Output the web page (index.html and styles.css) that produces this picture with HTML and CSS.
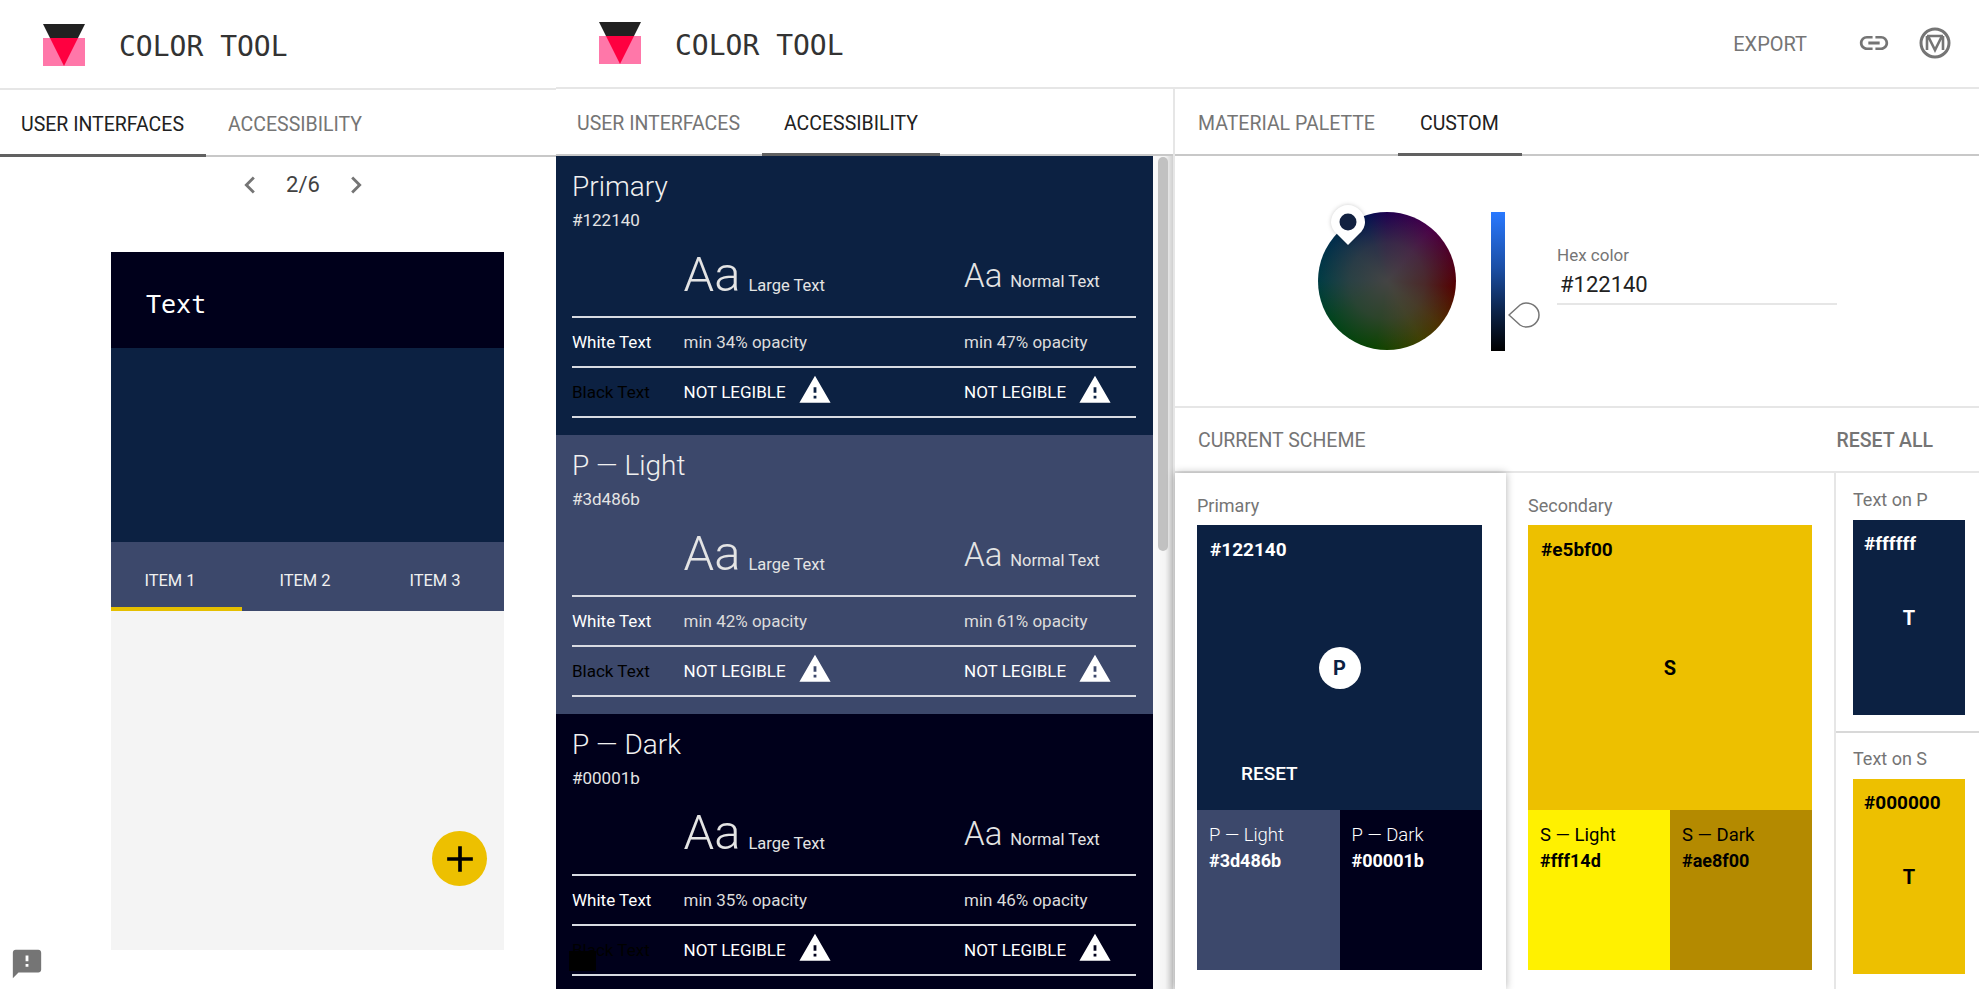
FILE: index.html
```html
<!DOCTYPE html>
<html>
<head>
<title>Color Tool</title>
<meta charset="UTF-8">
<link rel="stylesheet" href="styles.css">
</head>
<body>
<div class="app">

  <div class="preview">
    <div class="topbar preview-top">
      <svg class="logo" viewBox="0 0 42 42"><rect y="14" width="42" height="28" fill="#ff77a9"/><polygon points="0,0 42,0 35,14 7,14" fill="#212121"/><polygon points="7,14 35,14 21,42" fill="#ff0040"/></svg>
      <span class="brand">COLOR TOOL</span>
    </div>
    <div class="tabs preview-tabs">
      <div class="tab active first">USER INTERFACES</div>
      <div class="tab">ACCESSIBILITY</div>
    </div>
    <div class="pager">
      <svg class="chev" viewBox="0 0 24 24"><path d="M15.41 7.41L14 6l-6 6 6 6 1.41-1.41L10.83 12z"/></svg>
      <span>2/6</span>
      <svg class="chev" viewBox="0 0 24 24"><path d="M8.59 16.59L10 18l6-6-6-6-1.41 1.41L13.17 12z"/></svg>
    </div>
    <div class="phone">
      <div class="phone-bar">Text</div>
      <div class="phone-hero"></div>
      <div class="phone-tabs">
        <div class="phone-tab on">ITEM 1</div>
        <div class="phone-tab">ITEM 2</div>
        <div class="phone-tab">ITEM 3</div>
      </div>
      <div class="phone-body">
        <div class="fab"><svg viewBox="0 0 24 24"><path d="M19 13h-6v6h-2v-6H5v-2h6V5h2v6h6v2z"/></svg></div>
      </div>
    </div>
    <svg class="feedback" viewBox="0 0 24 24"><path d="M20 2H4c-1.1 0-1.99.9-1.99 2L2 22l4-4h14c1.1 0 2-.9 2-2V4c0-1.1-.9-2-2-2zm-7 12h-2v-2h2v2zm0-4h-2V6h2v4z"/></svg>
  </div>

  <div class="tool">
    <div class="topbar tool-top">
      <svg class="logo" viewBox="0 0 42 42"><rect y="14" width="42" height="28" fill="#ff77a9"/><polygon points="0,0 42,0 35,14 7,14" fill="#212121"/><polygon points="7,14 35,14 21,42" fill="#ff0040"/></svg>
      <span class="brand">COLOR TOOL</span>
      <span class="export">EXPORT</span>
      <svg class="link-icon" viewBox="0 0 24 24"><path d="M3.9 12c0-1.71 1.39-3.1 3.1-3.1h4V7H7c-2.76 0-5 2.24-5 5s2.24 5 5 5h4v-1.9H7c-1.71 0-3.1-1.39-3.1-3.1zM8 13h8v-2H8v2zm9-6h-4v1.9h4c1.71 0 3.1 1.39 3.1 3.1s-1.39 3.1-3.1 3.1h-4V17h4c2.76 0 5-2.24 5-5s-2.24-5-5-5z"/></svg>
      <svg class="m-icon" viewBox="0 0 32 32"><circle cx="16" cy="16" r="14" fill="none" stroke="#757575" stroke-width="3"/><path d="M8 9v14M24 9v14M8 9h16M9 9l7 14 7-14" fill="none" stroke="#757575" stroke-width="2.6"/></svg>
    </div>

    <div class="columns">
      <div class="access">
        <div class="tabs access-tabs">
          <div class="tab">USER INTERFACES</div>
          <div class="tab active">ACCESSIBILITY</div>
        </div>
        <div class="access-scroll">
          <div class="panels">

            <div class="panel primary">
              <h2>Primary</h2>
              <div class="panel-hex">#122140</div>
              <div class="row row-head">
                <div></div>
                <div class="large"><span class="aa-l">Aa</span> <span class="aa-note">Large Text</span></div>
                <div class="normal"><span class="aa-n">Aa</span> <span class="aa-note">Normal Text</span></div>
              </div>
              <div class="row"><div class="white">White Text</div><div class="dim">min 34% opacity</div><div class="dim">min 47% opacity</div></div>
              <div class="row">
                <div class="black">Black Text</div>
                <div class="bad">NOT LEGIBLE <svg class="warn" viewBox="0 0 24 24"><path d="M1 21h22L12 2 1 21zm12-3h-2v-2h2v2zm0-4h-2v-4h2v4z"/></svg></div>
                <div class="bad">NOT LEGIBLE <svg class="warn" viewBox="0 0 24 24"><path d="M1 21h22L12 2 1 21zm12-3h-2v-2h2v2zm0-4h-2v-4h2v4z"/></svg></div>
              </div>
            </div>

            <div class="panel light">
              <h2>P — Light</h2>
              <div class="panel-hex">#3d486b</div>
              <div class="row row-head">
                <div></div>
                <div class="large"><span class="aa-l">Aa</span> <span class="aa-note">Large Text</span></div>
                <div class="normal"><span class="aa-n">Aa</span> <span class="aa-note">Normal Text</span></div>
              </div>
              <div class="row"><div class="white">White Text</div><div class="dim">min 42% opacity</div><div class="dim">min 61% opacity</div></div>
              <div class="row">
                <div class="black">Black Text</div>
                <div class="bad">NOT LEGIBLE <svg class="warn" viewBox="0 0 24 24"><path d="M1 21h22L12 2 1 21zm12-3h-2v-2h2v2zm0-4h-2v-4h2v4z"/></svg></div>
                <div class="bad">NOT LEGIBLE <svg class="warn" viewBox="0 0 24 24"><path d="M1 21h22L12 2 1 21zm12-3h-2v-2h2v2zm0-4h-2v-4h2v4z"/></svg></div>
              </div>
            </div>

            <div class="panel dark">
              <h2>P — Dark</h2>
              <div class="panel-hex">#00001b</div>
              <div class="row row-head">
                <div></div>
                <div class="large"><span class="aa-l">Aa</span> <span class="aa-note">Large Text</span></div>
                <div class="normal"><span class="aa-n">Aa</span> <span class="aa-note">Normal Text</span></div>
              </div>
              <div class="row"><div class="white">White Text</div><div class="dim">min 35% opacity</div><div class="dim">min 46% opacity</div></div>
              <div class="row">
                <div class="black">Black Text<span class="ghost"></span></div>
                <div class="bad">NOT LEGIBLE <svg class="warn" viewBox="0 0 24 24"><path d="M1 21h22L12 2 1 21zm12-3h-2v-2h2v2zm0-4h-2v-4h2v4z"/></svg></div>
                <div class="bad">NOT LEGIBLE <svg class="warn" viewBox="0 0 24 24"><path d="M1 21h22L12 2 1 21zm12-3h-2v-2h2v2zm0-4h-2v-4h2v4z"/></svg></div>
              </div>
            </div>

          </div>
          <div class="scrollbar"><div class="thumb"></div></div>
        </div>
      </div>

      <div class="custom">
        <div class="tabs custom-tabs">
          <div class="tab">MATERIAL PALETTE</div>
          <div class="tab active">CUSTOM</div>
        </div>

        <div class="picker">
          <div class="wheel">
            <svg class="pin" viewBox="0 0 34 40"><path d="M17 0C8 0 0 8 0 17c0 5 3 9 5 11l12 12 12-12c2-2 5-6 5-11 0-9-8-17-17-17z" fill="#fff"/><circle cx="17" cy="17" r="8.5" fill="#122140"/></svg>
          </div>
          <div class="hue">
            <svg class="drop" viewBox="0 0 32 26"><path d="M1 13L12 3c2-1.500 4-2 6-2 7 0 13 5 13 12s-6 12-13 12c-2 0-4-.5-6-2z" fill="#fff" stroke="#757575" stroke-width="1.500"/></svg>
          </div>
          <div class="hex-field">
            <div class="hex-label">Hex color</div>
            <div class="hex-value">#122140</div>
          </div>
        </div>

        <div class="scheme-head">
          <span>CURRENT SCHEME</span>
          <span class="reset-all">RESET ALL</span>
        </div>

        <div class="scheme">
          <div class="card card-main raised">
            <div class="card-label">Primary</div>
            <div class="swatch-big s-primary">
              <div class="big-hex">#122140</div>
              <div class="badge badge-on">P</div>
              <div class="reset">RESET</div>
            </div>
            <div class="swatch-pair">
              <div class="swatch-small s-light"><div>P — Light</div><b>#3d486b</b></div>
              <div class="swatch-small s-dark"><div>P — Dark</div><b>#00001b</b></div>
            </div>
          </div>

          <div class="card card-main second">
            <div class="card-label">Secondary</div>
            <div class="swatch-big s-second">
              <div class="big-hex">#e5bf00</div>
              <div class="badge">S</div>
            </div>
            <div class="swatch-pair">
              <div class="swatch-small s-slight"><div>S — Light</div><b>#fff14d</b></div>
              <div class="swatch-small s-sdark"><div>S — Dark</div><b>#ae8f00</b></div>
            </div>
          </div>

          <div class="text-cards">
            <div class="text-card">
              <div class="card-label">Text on P</div>
              <div class="swatch-text s-primary"><div class="big-hex">#ffffff</div><div class="badge">T</div></div>
            </div>
            <div class="text-card">
              <div class="card-label">Text on S</div>
              <div class="swatch-text s-second"><div class="big-hex">#000000</div><div class="badge">T</div></div>
            </div>
          </div>
        </div>
      </div>
    </div>
  </div>

</div>
</body>
</html>
```

FILE: styles.css
```css
* { box-sizing: border-box; }
html, body {
  margin: 0;
  height: 100%;
  overflow: hidden;
  background: #fff;
}
body {
  font-family: Roboto, "Liberation Sans", sans-serif;
  color: #212121;
}
svg { display: block; }

.app {
  display: flex;
  height: 989px;
  position: relative;
}

/* header */
.topbar {
  display: flex;
  align-items: center;
  border-bottom: 2px solid #e6e6e6;
}
.preview-top {
  height: 90px;
  padding: 2px 0 0 43px;
}
.tool-top {
  height: 89px;
  padding: 0 28px 2px 43px;
}
.logo {
  width: 42px;
  height: 42px;
  flex: none;
}
.brand {
  font-family: "DejaVu Sans Mono", monospace;
  font-size: 28px;
  margin: 2px 0 0 34px;
  white-space: pre;
  color: #333;
}
.tool-top .brand { margin-top: 5px; }
.export {
  margin: 2px 50px 0 auto;
  font-size: 20px;
  color: #757575;
}
.link-icon {
  width: 34px;
  height: 34px;
  fill: #757575;
  margin-right: 28px;
}
.m-icon {
  width: 32px;
  height: 32px;
}

/* tabs */
.tabs {
  display: flex;
  height: 67px;
  border-bottom: 2px solid #c8c8c8;
  flex: none;
}
.tab {
  padding: 0 22px;
  font-size: 19.5px;
  line-height: 69px;
  color: #757575;
  white-space: nowrap;
  margin-bottom: -2px;
}
.tab.active {
  color: #212121;
  border-bottom: 3px solid #616161;
}
.preview-tabs .tab.first { padding: 0 22px 0 21px; }

/* left column */
.preview {
  width: 556px;
  flex: none;
}
.pager {
  height: 95px;
  display: flex;
  justify-content: center;
  align-items: flex-start;
  padding: 11px 0 0 50px;
  gap: 19px;
  font-size: 22px;
  line-height: 34px;
  color: #424242;
}
.chev {
  width: 34px;
  height: 34px;
  fill: #757575;
}
.phone {
  width: 393px;
  height: 698px;
  margin-left: 111px;
  display: flex;
  flex-direction: column;
}
.phone-bar {
  height: 96px;
  background: #00001b;
  color: #fff;
  font-family: "DejaVu Sans Mono", monospace;
  font-size: 25px;
  padding: 38px 0 0 35px;
}
.phone-hero {
  height: 194px;
  background: #0c2142;
}
.phone-tabs {
  height: 69px;
  background: #3c486b;
  display: flex;
}
.phone-tab {
  width: 131px;
  text-align: center;
  color: #f0f0f0;
  font-size: 16.5px;
  line-height: 78px;
  padding-right: 5px;
}
.phone-tab.on {
  border-bottom: 4px solid #e5bf00;
  padding-right: 13px;
}
.phone-tab:last-child { padding-right: 7px; }
.phone-body {
  flex: 1;
  background: #f4f4f4;
  position: relative;
}
.fab {
  position: absolute;
  right: 17px;
  bottom: 64px;
  width: 55px;
  height: 55px;
  border-radius: 50%;
  background: #edc000;
  display: flex;
  align-items: center;
  justify-content: center;
}
.fab svg { width: 44px; height: 44px; fill: #000; flex: none; }
.feedback {
  position: absolute;
  left: 10px;
  top: 947px;
  width: 34px;
  height: 34px;
  fill: #757575;
}

/* right of the preview */
.tool {
  flex: 1;
  display: flex;
  flex-direction: column;
  min-width: 0;
}
.columns {
  display: flex;
  flex: 1;
  min-height: 0;
}

/* accessibility */
.access {
  width: 619px;
  flex: none;
  border-right: 2px solid #e6e6e6;
  display: flex;
  flex-direction: column;
  min-height: 0;
}
.access-tabs .tab:first-child { padding-left: 21px; }
.access-scroll {
  flex: 1;
  display: flex;
  overflow: hidden;
}
.panels { width: 597px; flex: none; }
.scrollbar {
  flex: 1;
  background: linear-gradient(to right, #fafafa, #f4f4f4 60%, #d0d0d0);
  padding: 1px 5px 0 5px;
}
.thumb {
  height: 394px;
  background: #c1c1c1;
  border-radius: 6px;
}
.panel {
  height: 279px;
  padding: 12px 16px 0 16px;
  color: #fff;
}
.panel.primary { background: #0c2142; }
.panel.light { background: #3c486b; }
.panel.dark { background: #00001b; }
.panel h2 {
  margin: 0;
  font-size: 28px;
  font-weight: 300;
  line-height: 38px;
  color: #f0f0f0;
}
.panel-hex {
  font-size: 17px;
  line-height: 24px;
  margin-top: 2px;
  color: #e4e4e4;
  height: 35px;
}
.row {
  display: grid;
  grid-template-columns: 111.5px 280.500px 1fr;
  height: 50px;
  align-items: center;
  border-bottom: 2px solid #d8dbe2;
  font-size: 17px;
  width: 564px;
}
.row-head {
  height: 75px;
  padding-bottom: 21px;
  align-items: end;
}
.large, .normal {
  display: flex;
  align-items: baseline;
  gap: 8px;
  color: #e4e4e4;
  font-weight: 300;
}
.normal { margin-bottom: 4px; }
.aa-l { font-size: 49px; line-height: 40px; }
.aa-n { font-size: 33px; line-height: 30px; }
.aa-note { font-size: 16.5px; font-weight: 400; }
.white { color: #fff; }
.black { color: #000; position: relative; }
.dim { color: #dcdcdc; }
.bad {
  display: flex;
  align-items: center;
  gap: 12px;
  color: #fff;
}
.warn {
  width: 34px;
  height: 34px;
  fill: #fff;
  margin-top: -4px;
}
.ghost {
  position: absolute;
  left: -3px;
  top: 11px;
  width: 27px;
  height: 20px;
  background: #000;
}

/* custom */
.custom {
  flex: 1;
  display: flex;
  flex-direction: column;
  min-width: 0;
}
.custom-tabs .tab { padding: 0 23px 0 22px; }
.custom-tabs .tab:first-child { padding-left: 23px; }
.picker {
  height: 252px;
  border-bottom: 2px solid #e6e6e6;
  display: flex;
  align-items: flex-start;
  padding: 56px 0 0 143px;
  flex: none;
}
.wheel {
  width: 138px;
  height: 138px;
  border-radius: 50%;
  position: relative;
  background:
    radial-gradient(circle closest-side, #444 0, rgba(68,68,68,0.6) 55%, rgba(68,68,68,0) 100%),
    conic-gradient(#1e0050 0deg, #4a0048 40deg, #4f0020 70deg, #540000 95deg, #4d3000 130deg, #404000 150deg, #0a4400 190deg, #00441c 235deg, #003c44 270deg, #002c4c 310deg, #001450 340deg, #1e0050 360deg);
}
.pin {
  position: absolute;
  left: 13px;
  top: -7px;
  width: 34px;
  height: 40px;
  filter: drop-shadow(0 0 2px rgba(0,0,0,0.2));
}
.hue {
  width: 14px;
  height: 139px;
  margin-left: 35px;
  background: linear-gradient(#2979ff, #1b4fa6 40%, #0c2348 72%, #000);
  position: relative;
  flex: none;
}
.drop {
  position: absolute;
  left: 17px;
  top: 90px;
  width: 32px;
  height: 26px;
}
.hex-field {
  width: 280px;
  margin-left: 52px;
  margin-top: 33px;
  border-bottom: 2px solid #e6e6e6;
  height: 60px;
}
.hex-label {
  font-size: 17px;
  line-height: 20px;
  color: #757575;
}
.hex-value {
  font-size: 22px;
  line-height: 30px;
  margin: 5px 0 0 3px;
  color: #212121;
}
.scheme-head {
  height: 65px;
  flex: none;
  border-bottom: 2px solid #e6e6e6;
  display: flex;
  justify-content: space-between;
  align-items: center;
  padding: 2px 46px 0 23px;
  font-size: 19.5px;
  color: #757575;
}
.reset-all { font-weight: 500; }
.scheme {
  display: flex;
  flex: 1;
  min-height: 0;
}
.card-label {
  font-size: 18px;
  line-height: 20px;
  color: #757575;
}
.card-main {
  width: 331px;
  flex: none;
  padding: 23px 24px 0 22px;
  border-right: 2px solid #e6e6e6;
}
.card-main.second {
  width: 330px;
  padding-left: 22px;
  padding-right: 22px;
}
.card-main .card-label { height: 29px; }
.raised {
  box-shadow: 0 0 8px rgba(0,0,0,0.3);
  border-right: 0;
  position: relative;
}
.swatch-big {
  height: 285px;
  position: relative;
  padding: 13px;
}
.s-primary { background: #0c2142; color: #fff; }
.s-second { background: #edc000; color: #000; }
.big-hex {
  font-size: 19px;
  font-weight: 700;
  line-height: 24px;
}
.badge {
  position: absolute;
  left: 50%;
  top: 50%;
  transform: translate(-50%, -50%);
  font-size: 20px;
  font-weight: 700;
}
.badge-on {
  width: 42px;
  height: 42px;
  border-radius: 50%;
  background: #fff;
  color: #0c2142;
  text-align: center;
  line-height: 42px;
}
.reset {
  position: absolute;
  left: 44px;
  top: 237px;
  font-size: 19px;
  font-weight: 500;
  line-height: 24px;
}
.swatch-pair {
  display: flex;
  height: 160px;
}
.swatch-small {
  flex: 1;
  padding: 12px;
  font-size: 18px;
  line-height: 26px;
  font-weight: 300;
}
.swatch-small div { font-size: 18.5px; }
.swatch-small b { font-weight: 700; }
.s-light { background: #3c486b; color: #fff; }
.s-dark { background: #00001b; color: #fff; }
.s-slight { background: #fff100; color: #000; font-weight: 400; }
.s-sdark { background: #b48a00; color: #000; font-weight: 400; }
.text-cards {
  flex: 1;
  min-width: 0;
}
.text-card {
  height: 260px;
  padding: 17px 14px 0 17px;
  border-bottom: 2px solid #d8d8d8;
}
.text-card:last-child {
  border-bottom: 0;
  padding-top: 16px;
}
.text-card .card-label { height: 30px; }
.swatch-text {
  height: 195px;
  position: relative;
  padding: 12px 11px;
}
```
